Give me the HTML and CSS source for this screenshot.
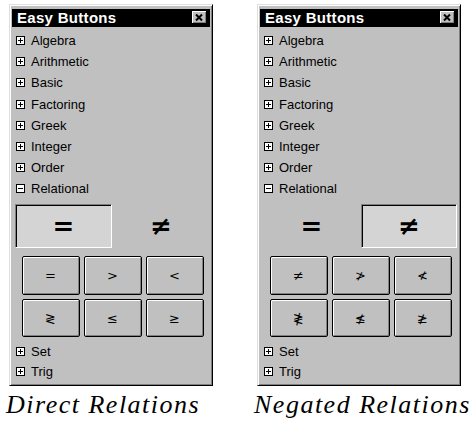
FILE: index.html
```html
<!DOCTYPE html>
<html>
<head>
<meta charset="utf-8">
<link rel="stylesheet" href="styles.css">
</head>
<body>
<div class="page">
  <figure class="fig">
    <div class="panel">
      <div class="titlebar">
        <span class="title">Easy Buttons</span>
        <svg class="close" width="15" height="13" viewBox="0 0 15 13">
          <rect x="0" y="0" width="15" height="13" fill="#000"/>
          <rect x="0" y="0" width="14" height="12" fill="#fff"/>
          <rect x="1" y="1" width="13" height="11" fill="#808080"/>
          <rect x="1" y="1" width="12" height="10" fill="#c0c0c0"/>
          <path d="M4 3.5l6 6M10 3.5l-6 6" stroke="#000" stroke-width="2"/>
        </svg>
      </div>
      <ul class="tree">
        <li class="node"><svg class="exp" width="9" height="9"><rect x="0.5" y="0.5" width="8" height="8" fill="#fff" stroke="#000"/><path d="M2 4.5h5M4.5 2v5" stroke="#000"/></svg>Algebra</li>
        <li class="node"><svg class="exp" width="9" height="9"><rect x="0.5" y="0.5" width="8" height="8" fill="#fff" stroke="#000"/><path d="M2 4.5h5M4.5 2v5" stroke="#000"/></svg>Arithmetic</li>
        <li class="node"><svg class="exp" width="9" height="9"><rect x="0.5" y="0.5" width="8" height="8" fill="#fff" stroke="#000"/><path d="M2 4.5h5M4.5 2v5" stroke="#000"/></svg>Basic</li>
        <li class="node"><svg class="exp" width="9" height="9"><rect x="0.5" y="0.5" width="8" height="8" fill="#fff" stroke="#000"/><path d="M2 4.5h5M4.5 2v5" stroke="#000"/></svg>Factoring</li>
        <li class="node"><svg class="exp" width="9" height="9"><rect x="0.5" y="0.5" width="8" height="8" fill="#fff" stroke="#000"/><path d="M2 4.5h5M4.5 2v5" stroke="#000"/></svg>Greek</li>
        <li class="node"><svg class="exp" width="9" height="9"><rect x="0.5" y="0.5" width="8" height="8" fill="#fff" stroke="#000"/><path d="M2 4.5h5M4.5 2v5" stroke="#000"/></svg>Integer</li>
        <li class="node"><svg class="exp" width="9" height="9"><rect x="0.5" y="0.5" width="8" height="8" fill="#fff" stroke="#000"/><path d="M2 4.5h5M4.5 2v5" stroke="#000"/></svg>Order</li>
        <li class="node"><svg class="exp" width="9" height="9"><rect x="0.5" y="0.5" width="8" height="8" fill="#fff" stroke="#000"/><path d="M2 4.5h5" stroke="#000"/></svg>Relational</li>
      </ul>
      <div class="preview">
        <div class="cell sunken">=</div>
        <div class="cell">≠</div>
      </div>
      <div class="grid">
        <div class="btn">=</div>
        <div class="btn">&gt;</div>
        <div class="btn">&lt;</div>
        <div class="btn">≷</div>
        <div class="btn">≤</div>
        <div class="btn">≥</div>
      </div>
      <ul class="tree tail">
        <li class="node"><svg class="exp" width="9" height="9"><rect x="0.5" y="0.5" width="8" height="8" fill="#fff" stroke="#000"/><path d="M2 4.5h5M4.5 2v5" stroke="#000"/></svg>Set</li>
        <li class="node"><svg class="exp" width="9" height="9"><rect x="0.5" y="0.5" width="8" height="8" fill="#fff" stroke="#000"/><path d="M2 4.5h5M4.5 2v5" stroke="#000"/></svg>Trig</li>
      </ul>
    </div>
    <figcaption class="caption">Direct Relations</figcaption>
  </figure>

  <figure class="fig">
    <div class="panel">
      <div class="titlebar">
        <span class="title">Easy Buttons</span>
        <svg class="close" width="15" height="13" viewBox="0 0 15 13">
          <rect x="0" y="0" width="15" height="13" fill="#000"/>
          <rect x="0" y="0" width="14" height="12" fill="#fff"/>
          <rect x="1" y="1" width="13" height="11" fill="#808080"/>
          <rect x="1" y="1" width="12" height="10" fill="#c0c0c0"/>
          <path d="M4 3.5l6 6M10 3.5l-6 6" stroke="#000" stroke-width="2"/>
        </svg>
      </div>
      <ul class="tree">
        <li class="node"><svg class="exp" width="9" height="9"><rect x="0.5" y="0.5" width="8" height="8" fill="#fff" stroke="#000"/><path d="M2 4.5h5M4.5 2v5" stroke="#000"/></svg>Algebra</li>
        <li class="node"><svg class="exp" width="9" height="9"><rect x="0.5" y="0.5" width="8" height="8" fill="#fff" stroke="#000"/><path d="M2 4.5h5M4.5 2v5" stroke="#000"/></svg>Arithmetic</li>
        <li class="node"><svg class="exp" width="9" height="9"><rect x="0.5" y="0.5" width="8" height="8" fill="#fff" stroke="#000"/><path d="M2 4.5h5M4.5 2v5" stroke="#000"/></svg>Basic</li>
        <li class="node"><svg class="exp" width="9" height="9"><rect x="0.5" y="0.5" width="8" height="8" fill="#fff" stroke="#000"/><path d="M2 4.5h5M4.5 2v5" stroke="#000"/></svg>Factoring</li>
        <li class="node"><svg class="exp" width="9" height="9"><rect x="0.5" y="0.5" width="8" height="8" fill="#fff" stroke="#000"/><path d="M2 4.5h5M4.5 2v5" stroke="#000"/></svg>Greek</li>
        <li class="node"><svg class="exp" width="9" height="9"><rect x="0.5" y="0.5" width="8" height="8" fill="#fff" stroke="#000"/><path d="M2 4.5h5M4.5 2v5" stroke="#000"/></svg>Integer</li>
        <li class="node"><svg class="exp" width="9" height="9"><rect x="0.5" y="0.5" width="8" height="8" fill="#fff" stroke="#000"/><path d="M2 4.5h5M4.5 2v5" stroke="#000"/></svg>Order</li>
        <li class="node"><svg class="exp" width="9" height="9"><rect x="0.5" y="0.5" width="8" height="8" fill="#fff" stroke="#000"/><path d="M2 4.5h5" stroke="#000"/></svg>Relational</li>
      </ul>
      <div class="preview">
        <div class="cell">=</div>
        <div class="cell sunken">≠</div>
      </div>
      <div class="grid">
        <div class="btn">≠</div>
        <div class="btn">≯</div>
        <div class="btn">≮</div>
        <div class="btn">≹</div>
        <div class="btn">≰</div>
        <div class="btn">≱</div>
      </div>
      <ul class="tree tail">
        <li class="node"><svg class="exp" width="9" height="9"><rect x="0.5" y="0.5" width="8" height="8" fill="#fff" stroke="#000"/><path d="M2 4.5h5M4.5 2v5" stroke="#000"/></svg>Set</li>
        <li class="node"><svg class="exp" width="9" height="9"><rect x="0.5" y="0.5" width="8" height="8" fill="#fff" stroke="#000"/><path d="M2 4.5h5M4.5 2v5" stroke="#000"/></svg>Trig</li>
      </ul>
    </div>
    <figcaption class="caption">Negated Relations</figcaption>
  </figure>
</div>
</body>
</html>
```

FILE: styles.css
```css
* { box-sizing: border-box; }
html, body { margin: 0; padding: 0; background: #fff; }
body { font-family: "Liberation Sans", Arial, sans-serif; color: #000; }

.page {
  display: flex;
  gap: 44px;
  padding: 4px 0 0 9px;
}

.fig { margin: 0; width: 204px; }

.panel {
  width: 204px;
  background: #c0c0c0;
  border: 1px solid;
  border-color: #dfdfdf #000 #000 #dfdfdf;
  box-shadow: inset 1px 1px #fff, inset -1px -1px #808080;
  padding: 4px 2px 3px 2px;
}

.titlebar {
  height: 18px;
  background: #000;
  display: flex;
  align-items: center;
  justify-content: space-between;
  padding: 0 3px 0 5px;
}
.title {
  color: #fff;
  font-weight: bold;
  font-size: 15px;
  letter-spacing: 0.3px;
  line-height: 18px;
}
.close { display: block; margin-top: -1px; }

.tree { list-style: none; margin: 3px 0 0 0; padding: 0; }
.tree.tail { margin-top: 4px; }
.node {
  height: 21.2px;
  display: flex;
  align-items: center;
  padding-left: 4px;
  font-size: 13px;
}
.tail .node { height: 20.5px; }
.exp { display: block; margin-right: 6px; flex: none; }

.preview {
  display: grid;
  grid-template-columns: 97px 96px;
  gap: 1px;
  margin: 4.5px 0 0 3px;
}
.cell {
  height: 44px;
  display: flex;
  align-items: center;
  justify-content: center;
  font-family: "DejaVu Sans", sans-serif;
  font-weight: bold;
  font-size: 26px;
}
.cell.sunken {
  background: #d4d4d4;
  border: 1px solid;
  border-color: #808080 #fff #fff #808080;
  box-shadow: inset 1px 1px #000;
}

.grid {
  display: grid;
  grid-template-columns: repeat(3, 58px);
  grid-template-rows: 39px 38px;
  gap: 4px;
  margin: 8px 0 0 9.5px;
}
.btn {
  display: flex;
  align-items: center;
  justify-content: center;
  background: #c0c0c0;
  border: 1px solid #000;
  border-radius: 2px;
  box-shadow: inset 1px 1px #fff, inset -1px -1px #808080;
  font-family: "DejaVu Sans", sans-serif;
  font-size: 13px;
}

.caption {
  margin: 6px 0 0 -3px;
  font-family: "Liberation Serif", "Times New Roman", serif;
  font-style: italic;
  font-size: 26px;
  letter-spacing: 1.5px;
  white-space: nowrap;
  line-height: 26px;
}
```
